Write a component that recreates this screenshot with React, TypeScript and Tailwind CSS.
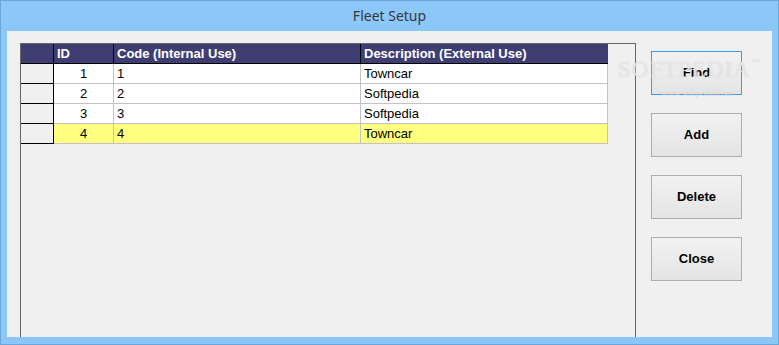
import React from "react";

const rows = [
  { id: "1", code: "1", desc: "Towncar", sel: false },
  { id: "2", code: "2", desc: "Softpedia", sel: false },
  { id: "3", code: "3", desc: "Softpedia", sel: false },
  { id: "4", code: "4", desc: "Towncar", sel: true },
];

function Btn({ label, focused }: { label: string; focused?: boolean }) {
  return (
    <div
      className={
        "w-[91px] h-[44px] flex items-center justify-center border bg-gradient-to-b from-[#f2f2f2] to-[#e4e4e4] text-[13px] font-bold text-black " +
        (focused ? "border-[#3c9bf5]" : "border-[#adadad]")
      }
    >
      {label}
    </div>
  );
}

export default function App() {
  return (
    <div className="relative w-[779px] h-[345px] bg-[#8cc7f9] border border-[#6da5d9] flex flex-col font-['Liberation_Sans',Arial,sans-serif] overflow-hidden">
      <div className="h-[29px] flex items-center justify-center text-[14px] text-[#383838] font-['Noto_Sans',sans-serif]">
        Fleet Setup
      </div>
      <div className="flex-1 mx-[6px] mb-[7px] mt-[1px] bg-[#f0f0f0] flex">
        <div className="ml-[13px] mt-[12px] w-[616px] self-stretch border-l border-t border-r border-[#666666]">
          <div className="flex w-[587px] h-[20px] bg-[#3f3e73] border-b border-black text-white text-[13px] font-bold leading-none">
            <div className="w-[33px] border-r border-black" />
            <div className="w-[60px] border-r border-black pl-[3px] flex items-center">ID</div>
            <div className="w-[247px] border-r border-black pl-[3px] flex items-center">Code (Internal Use)</div>
            <div className="w-[247px] pl-[3px] flex items-center">Description (External Use)</div>
          </div>
          {rows.map((r) => (
            <div key={r.id} className="flex w-[587px] h-[20px] text-[13px] text-black leading-none">
              <div className="w-[33px] bg-[#f0f0f0] border-r border-b border-black" />
              <div
                className={
                  "w-[60px] border-r border-b border-[#c3c3c3] flex items-center justify-center " +
                  (r.sel ? "bg-[#ffff80]" : "bg-white")
                }
              >
                {r.id}
              </div>
              <div
                className={
                  "w-[247px] border-r border-b border-[#c3c3c3] pl-[3px] flex items-center " +
                  (r.sel ? "bg-[#ffff80]" : "bg-white")
                }
              >
                {r.code}
              </div>
              <div
                className={
                  "w-[247px] border-r border-b border-[#c3c3c3] pl-[3px] flex items-center " +
                  (r.sel ? "bg-[#ffff80]" : "bg-white")
                }
              >
                {r.desc}
              </div>
            </div>
          ))}
        </div>
        <div className="ml-[15px] mt-[20px] flex flex-col gap-[18px]">
          <Btn label="Find" focused />
          <Btn label="Add" />
          <Btn label="Delete" />
          <Btn label="Close" />
        </div>
      </div>
      <div className="absolute left-[617px] top-[57px] pointer-events-none font-['Liberation_Serif',serif] text-[23px] leading-none tracking-[1px] text-white/50 [text-shadow:0_0_1px_#c8c8c8]">
        SOFTPEDIA<span className="text-[9px] align-top">™</span>
      </div>
      <div className="absolute left-[660px] top-[88px] pointer-events-none font-['Liberation_Serif',serif] text-[9px] leading-none text-[#dadada]">
        www.softpedia.com
      </div>
    </div>
  );
}
